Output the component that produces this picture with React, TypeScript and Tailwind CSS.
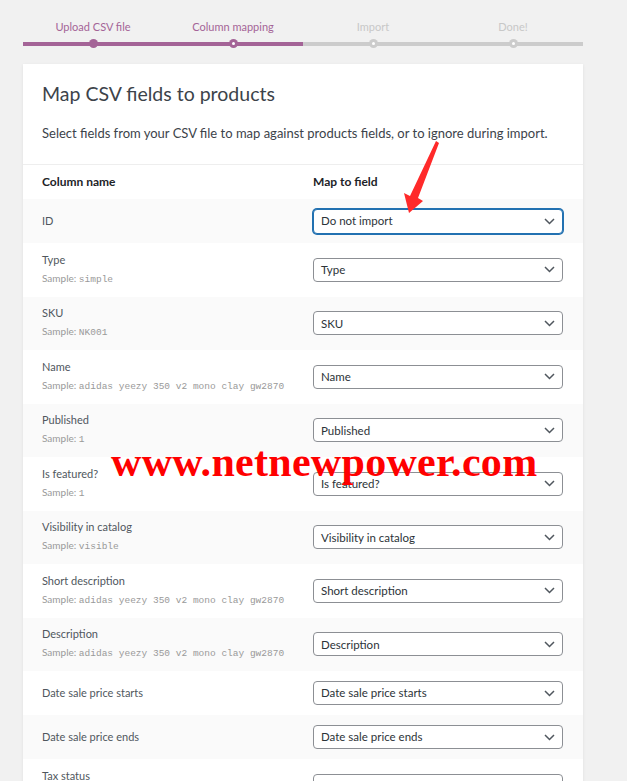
import React from "react";

const sans = "font-['Lato','Open_Sans',sans-serif]";

type Row = { label: string; sample?: string; value: string; focused?: boolean };

const rows: Row[] = [
  { label: "ID", value: "Do not import", focused: true },
  { label: "Type", sample: "simple", value: "Type" },
  { label: "SKU", sample: "NK001", value: "SKU" },
  { label: "Name", sample: "adidas yeezy 350 v2 mono clay gw2870", value: "Name" },
  { label: "Published", sample: "1", value: "Published" },
  { label: "Is featured?", sample: "1", value: "Is featured?" },
  { label: "Visibility in catalog", sample: "visible", value: "Visibility in catalog" },
  { label: "Short description", sample: "adidas yeezy 350 v2 mono clay gw2870", value: "Short description" },
  { label: "Description", sample: "adidas yeezy 350 v2 mono clay gw2870", value: "Description" },
  { label: "Date sale price starts", value: "Date sale price starts" },
  { label: "Date sale price ends", value: "Date sale price ends" },
  { label: "Tax status", sample: "taxable", value: "Tax status" },
];

const steps = [
  { label: "Upload CSV file", done: true, full: true },
  { label: "Column mapping", done: true, full: false },
  { label: "Import", done: false, full: false },
  { label: "Done!", done: false, full: false },
];

function Chevron() {
  return (
    <svg width="11" height="7" viewBox="0 0 11 7" className="shrink-0">
      <path d="M1 1l4.5 4.5L10 1" fill="none" stroke="#50575e" strokeWidth="1.5" />
    </svg>
  );
}

function Select({ value, focused }: { value: string; focused?: boolean }) {
  return (
    <div
      className={
        focused
          ? "flex h-[25px] w-[250px] items-center justify-between rounded-[4px] border border-[#2271b1] bg-white pl-[7px] pr-[7px] shadow-[0_0_0_1px_#2271b1]"
          : "flex h-[24px] w-[250px] items-center justify-between rounded-[4px] border border-[#8c8f94] bg-white pl-[7px] pr-[7px]"
      }
    >
      <span className="text-[11.5px] leading-none text-[#2c3338]">{value}</span>
      <Chevron />
    </div>
  );
}

export default function App() {
  return (
    <div className={`relative min-h-[781px] overflow-hidden bg-[#f1f1f1] ${sans}`}>
      <div className="ml-[23px] w-[560px]">
        {/* Steps */}
        <div className="grid grid-cols-4 pt-[20px]">
          {steps.map((s, i) => (
            <div key={i} className="flex flex-col items-center">
              <div
                className={`text-[11px] leading-[14px] ${s.done ? "text-[#a46497]" : "text-[#c8c8c8]"}`}
              >
                {s.label}
              </div>
              <div className="relative mt-[5px] flex h-[9px] w-full items-center justify-center">
                <div className={`absolute inset-x-0 top-[2.5px] h-[4px] ${s.done ? "bg-[#a46497]" : "bg-[#cccccc]"}`} />
                <div
                  className={`relative flex h-[9px] w-[9px] items-center justify-center rounded-full ${s.done ? "bg-[#a46497]" : "bg-[#cccccc]"}`}
                >
                  {!s.full && <div className="h-[3px] w-[3px] rounded-full bg-white" />}
                </div>
              </div>
            </div>
          ))}
        </div>

        {/* Card */}
        <div className="mt-[16px] bg-white shadow-[0_1px_3px_rgba(0,0,0,0.08)]">
          <div className="px-[19px] pt-[18px] pb-[21px]">
            <h2 className="text-[19.5px] leading-[24px] text-[#3c434a]">Map CSV fields to products</h2>
            <p className="mt-[17px] text-[13px] leading-[20px] text-[#3c434a]">
              Select fields from your CSV file to map against products fields, or to ignore during import.
            </p>
          </div>
          <div className="h-px bg-[#eeeeee]" />
          <div className="grid h-[34px] grid-cols-[1fr_250px] items-center gap-[20px] pl-[19px] pr-[20px]">
            <div className="text-[12px] font-bold text-[#1d2327]">Column name</div>
            <div className="text-[12px] font-bold text-[#1d2327]">Map to field</div>
          </div>
          {rows.map((r, i) => (
            <div
              key={i}
              className={`grid grid-cols-[1fr_250px] items-center gap-[20px] pl-[19px] pr-[20px] ${
                r.sample ? "h-[53.5px]" : "h-[44px]"
              } ${i % 2 === 0 ? "bg-[#fafafa]" : "bg-white"}`}
            >
              <div className="flex flex-col">
                <div className="text-[11px] leading-[14px] text-[#50575e]">{r.label}</div>
                {r.sample && (
                  <div className="mt-[4px] text-[10px] leading-[14px] text-[#999999]">
                    Sample:{" "}
                    <code className="font-['Liberation_Mono',monospace] text-[9.5px]">{r.sample}</code>
                  </div>
                )}
              </div>
              <Select value={r.value} focused={r.focused} />
            </div>
          ))}
        </div>
      </div>

      {/* Red arrow annotation */}
      <svg className="pointer-events-none absolute left-0 top-0" width="627" height="781">
        <polygon
          points="436,141 439,143 418,198 423,201 409,213 404,193 410,196"
          fill="#ff2a2a"
        />
      </svg>

      {/* Watermark */}
      <div className="pointer-events-none absolute left-[111px] top-[439px] whitespace-nowrap font-['Liberation_Serif',serif] text-[42px] font-bold leading-[46px] tracking-[0.3px] text-[#ff0000]">
        www.netnewpower.com
      </div>
    </div>
  );
}
